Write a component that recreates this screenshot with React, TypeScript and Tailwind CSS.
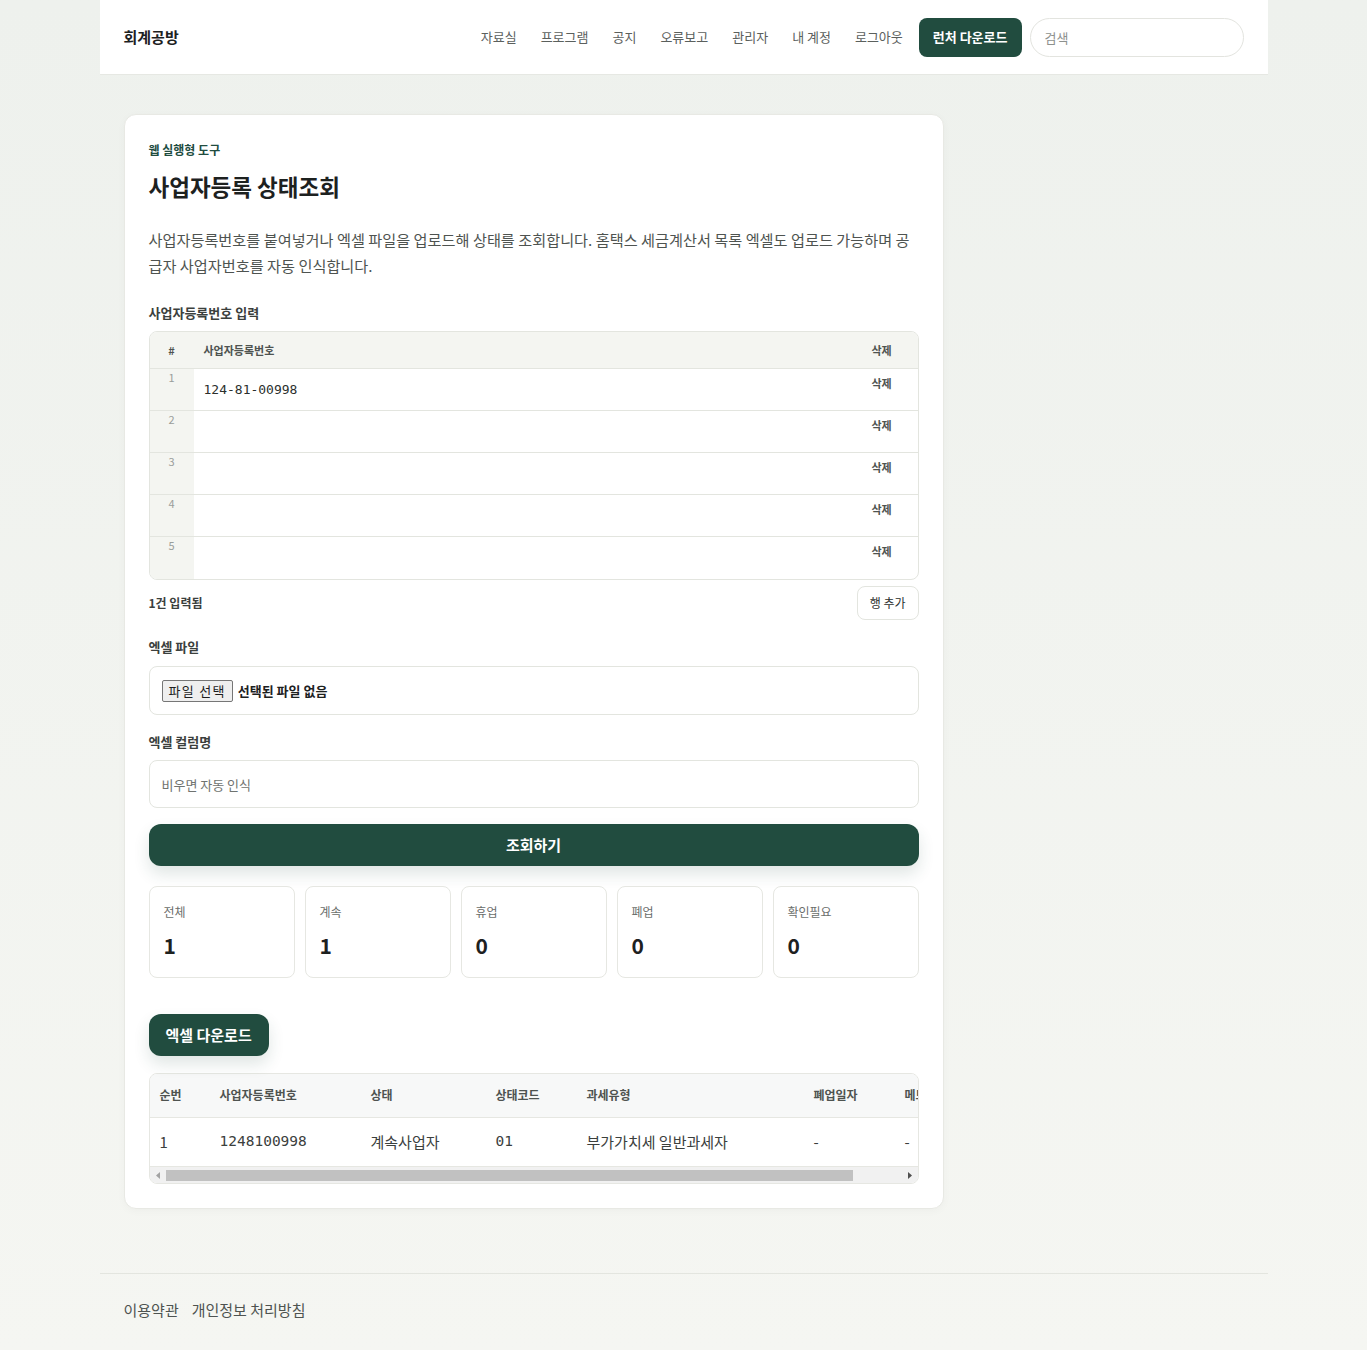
import React, { useState } from "react";

const NAV = ["자료실", "프로그램", "공지", "오류보고", "관리자", "내 계정", "로그아웃"];

const STATS = [
  { label: "전체", value: 1 },
  { label: "계속", value: 1 },
  { label: "휴업", value: 0 },
  { label: "폐업", value: 0 },
  { label: "확인필요", value: 0 },
];

const RESULT_COLS = [
  { key: "no", label: "순번", w: "w-[60px]" },
  { key: "bizNo", label: "사업자등록번호", w: "w-[151px]" },
  { key: "status", label: "상태", w: "w-[125px]" },
  { key: "code", label: "상태코드", w: "w-[91px]" },
  { key: "taxType", label: "과세유형", w: "w-[227px]" },
  { key: "closedAt", label: "폐업일자", w: "w-[91px]" },
  { key: "memo", label: "메모", w: "w-[200px]" },
];

const mono = "font-['DejaVu_Sans_Mono',monospace]";

export default function App() {
  const [rows, setRows] = useState<string[]>(["124-81-00998", "", "", "", ""]);
  const filled = rows.filter((r) => r.trim() !== "").length;

  const removeRow = (idx: number) => setRows(rows.filter((_, i) => i !== idx));

  return (
    <div className="min-h-screen bg-gradient-to-b from-[#eef1ed] to-[#f5f6f2] font-['Noto_Sans_CJK_KR','Noto_Sans',sans-serif] text-[#1d211f]">
      {/* 상단 헤더 */}
      <header className="mx-auto flex h-[75px] max-w-[1168px] items-center justify-between border-b border-[#e6e8e3] bg-white px-6">
        <span className="text-[15px] font-bold text-[#1d211f]">회계공방</span>
        <nav className="flex items-center">
          <div className="flex items-center gap-6">
            {NAV.map((n) => (
              <a key={n} className="text-[13px] text-[#5b605d]">
                {n}
              </a>
            ))}
          </div>
          <button className="ml-4 h-[39px] rounded-lg bg-[#214c3f] px-[14px] text-[13px] font-bold text-white">
            런처 다운로드
          </button>
          <input
            placeholder="검색"
            className="ml-2 h-[39px] w-[214px] rounded-full border border-[#e3e4df] bg-white px-[14px] text-[13px] outline-none placeholder:text-[#8d918e]"
          />
        </nav>
      </header>

      <main className="mx-auto max-w-[1168px] px-6 pt-[39px]">
        <section className="w-[820px] rounded-xl border border-[#e8e9e4] bg-white px-6 pb-6 pt-[26px] shadow-[0_2px_8px_rgba(0,0,0,0.03)]">
          <p className="text-[12px] font-bold leading-[18px] text-[#214c3f]">웹 실행형 도구</p>
          <h1 className="mt-[11px] text-[22.5px] font-bold leading-[32px] text-[#1d211f]">사업자등록 상태조회</h1>
          <p className="mt-[24px] text-[15.2px] leading-[26px] text-[#4e5350]">
            사업자등록번호를 붙여넣거나 엑셀 파일을 업로드해 상태를 조회합니다. 홈택스 세금계산서 목록 엑셀도 업로드 가능하며 공급자 사업자번호를 자동 인식합니다.
          </p>

          {/* 번호 입력 그리드 */}
          <label className="mt-[26px] block text-[13px] font-bold leading-[18px] text-[#3b403d]">사업자등록번호 입력</label>
          <div className="mt-[9px] overflow-hidden rounded-lg border border-[#e3e5df]">
            <div className="flex h-[37px] items-center border-b border-[#e3e5df] bg-[#f4f5f1] text-[11px] font-bold text-[#4e5350]">
              <span className="w-[44px] text-center">#</span>
              <span className="flex-1 pl-[10px]">사업자등록번호</span>
              <span className="w-[72px] text-center">삭제</span>
            </div>
            {rows.map((r, i) => (
              <div key={i} className="flex h-[42px] border-b border-[#e3e5df] last:border-b-0">
                <span className="w-[44px] bg-[#f4f5f1] text-center text-[11px] text-[#9a9e9b]">{i + 1}</span>
                <input
                  value={r}
                  onChange={(e) => setRows(rows.map((v, j) => (j === i ? e.target.value : v)))}
                  className={`flex-1 bg-transparent pl-[10px] pt-[1px] text-[13px] text-[#2b2f2d] outline-none ${mono}`}
                />
                <button
                  onClick={() => removeRow(i)}
                  className="w-[72px] self-start pt-[6px] text-center text-[11px] font-bold text-[#4e5350]"
                >
                  삭제
                </button>
              </div>
            ))}
          </div>

          <div className="mt-[6px] flex items-center justify-between">
            <span className="text-[12px] font-bold text-[#3b403d]">{filled}건 입력됨</span>
            <button
              onClick={() => setRows([...rows, ""])}
              className="h-[34px] rounded-lg border border-[#e3e5df] bg-white px-[12px] text-[12px] text-[#2b2f2d]"
            >
              행 추가
            </button>
          </div>

          {/* 엑셀 파일 */}
          <label className="mt-[18px] block text-[13px] font-bold leading-[18px] text-[#3b403d]">엑셀 파일</label>
          <div className="mt-[10px] flex h-[49px] items-center rounded-lg border border-[#e3e5df] px-[12px]">
            <span className="rounded-[2px] border border-[#767676] bg-[#efefef] px-[6px] text-[13px] leading-[20px] tracking-[0.1em] text-[#1d1d1d]">
              파일 선택
            </span>
            <span className="ml-[5px] text-[13px] font-bold text-[#1d211f]">선택된 파일 없음</span>
          </div>

          <label className="mt-[18px] block text-[13px] font-bold leading-[18px] text-[#3b403d]">엑셀 컬럼명</label>
          <input
            placeholder="비우면 자동 인식"
            className="mt-[9px] h-[48px] w-full rounded-lg border border-[#e3e5df] px-[12px] text-[13px] outline-none placeholder:text-[#6f7370]"
          />

          <button className="mt-[16px] h-[42px] w-full rounded-xl bg-[#214c3f] text-[15px] font-bold text-white shadow-[0_8px_16px_rgba(33,76,63,0.14)]">
            조회하기
          </button>

          {/* 집계 */}
          <div className="mt-[20px] grid grid-cols-5 gap-[10px]">
            {STATS.map((s) => (
              <div key={s.label} className="h-[92px] rounded-lg border border-[#e6e7e2] bg-white px-[14px] pt-[16px]">
                <p className="text-[12px] text-[#6a6e6b]">{s.label}</p>
                <p className="mt-[10px] text-[21px] font-semibold leading-[28px] text-[#1d211f]">{s.value}</p>
              </div>
            ))}
          </div>

          <button className="mt-[36px] h-[42px] rounded-xl bg-[#214c3f] px-[17px] text-[15px] font-bold text-white shadow-[0_8px_16px_rgba(33,76,63,0.14)]">
            엑셀 다운로드
          </button>

          {/* 조회 결과 */}
          <div className="mt-[17px] overflow-hidden rounded-lg border border-[#e6e7e2]">
            <div className="overflow-hidden">
              <table className="w-[945px] table-fixed border-collapse text-left">
                <thead>
                  <tr className="h-[43px] border-b border-[#e6e7e2] bg-[#f7f8f8]">
                    {RESULT_COLS.map((c) => (
                      <th key={c.key} className={`${c.w} whitespace-nowrap px-[10px] text-[12px] font-bold text-[#4e5350]`}>
                        {c.label}
                      </th>
                    ))}
                  </tr>
                </thead>
                <tbody>
                  <tr className="h-[49px] text-[15px] text-[#3b403d]">
                    <td className="px-[10px]">1</td>
                    <td className={`px-[10px] text-[14.5px] ${mono}`}>1248100998</td>
                    <td className="px-[10px]">계속사업자</td>
                    <td className={`px-[10px] text-[14.5px] ${mono}`}>01</td>
                    <td className="px-[10px]">부가가치세 일반과세자</td>
                    <td className="px-[10px]">-</td>
                    <td className="px-[10px]">-</td>
                  </tr>
                </tbody>
              </table>
            </div>
            {/* 가로 스크롤바 */}
            <div className="flex h-[17px] items-center border-t border-[#e6e7e2] bg-[#f1f1f1]">
              <span className="flex w-[16px] justify-center">
                <svg width="4" height="7" viewBox="0 0 4 7">
                  <path d="M4 0 L0 3.5 L4 7 Z" fill="#a3a3a3" />
                </svg>
              </span>
              <div className="h-[11px] w-[687px] bg-[#c1c1c1]" />
              <div className="flex-1" />
              <span className="flex w-[16px] justify-center">
                <svg width="4" height="7" viewBox="0 0 4 7">
                  <path d="M0 0 L4 3.5 L0 7 Z" fill="#505050" />
                </svg>
              </span>
            </div>
          </div>
        </section>
      </main>

      {/* 하단 푸터 */}
      <footer className="mx-auto mt-[64px] max-w-[1168px] border-t border-[#e3e5df] px-6 pb-[28px] pt-[25px]">
        <div className="flex gap-[13px] text-[15px] text-[#4e5350]">
          <a>이용약관</a>
          <a>개인정보 처리방침</a>
        </div>
      </footer>
    </div>
  );
}
